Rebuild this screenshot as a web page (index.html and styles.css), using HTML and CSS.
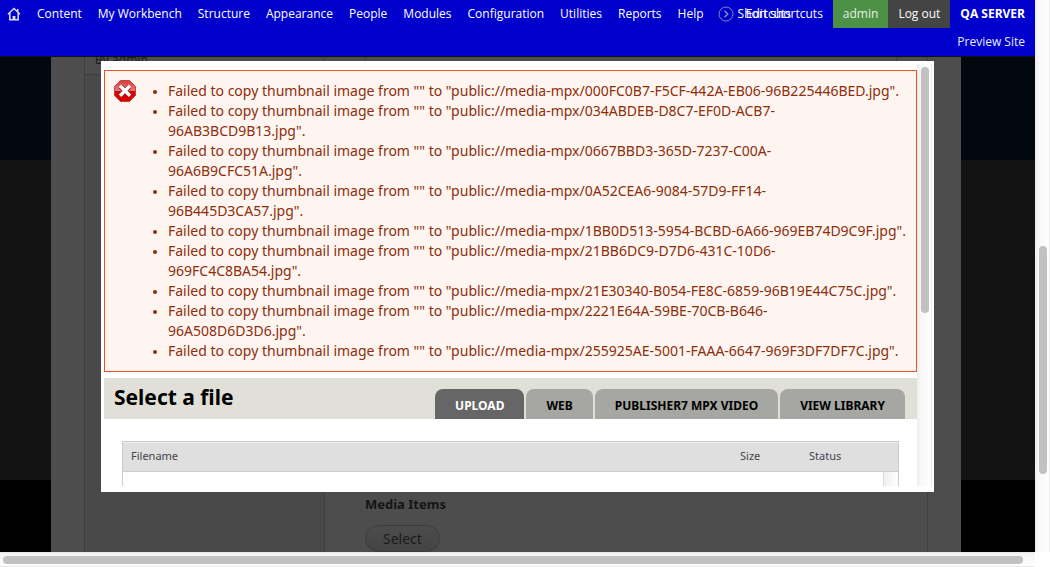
FILE: index.html
```
<!DOCTYPE html>
<html lang="en">
<head>
<meta charset="utf-8">
<title>Select a file</title>
<link rel="stylesheet" href="styles.css">
</head>
<body>
<div class="window">
  <div class="view">
    <header class="toolbar">
      <nav class="menu">
        <a class="home" href="#" aria-label="Home"><svg width="14" height="14" viewBox="0 0 14 14" fill="none" stroke="#dcdcff" stroke-width="1.5"><path d="M1 7.3 7 1.5l6 5.8M2.8 6v6.7h8.4V6M10.7 4.8V2"/><path d="M5.6 9h2.8v3.7H5.6z" fill="#dcdcff" stroke="none"/></svg></a>
        <a href="#">Content</a>
        <a href="#">My Workbench</a>
        <a href="#">Structure</a>
        <a href="#">Appearance</a>
        <a href="#">People</a>
        <a href="#">Modules</a>
        <a href="#">Configuration</a>
        <a href="#">Utilities</a>
        <a href="#">Reports</a>
        <a href="#">Help</a>
      </nav>
      <div class="shortcuts">
        <svg width="16" height="16" viewBox="0 0 16 16" fill="none" stroke="#8584b0"><circle cx="8" cy="8" r="7"/><path d="m6.5 4.8 3.2 3.2-3.2 3.2" stroke-width="1.6"/></svg>
        <a href="#">Shortcuts</a>
        <a class="edit-shortcuts" href="#">Edit shortcuts</a>
      </div>
      <div class="account">
        <div class="account-row">
          <a class="user" href="#">admin</a>
          <a class="logout" href="#">Log out</a>
          <a class="server" href="#">QA SERVER</a>
        </div>
        <a class="preview" href="#">Preview Site</a>
      </div>
    </header>
    <div class="backdrop">
      <div class="side"></div>
      <div class="page">
        <aside class="tabs-column"><div class="author">By admin</div></aside>
        <section class="fields">
          <div class="text-area"></div>
          <div class="media">
            <h2 class="media-title">Media Items</h2>
            <button class="select" type="button">Select</button>
          </div>
        </section>
      </div>
      <div class="side"></div>
    </div>
    <div class="dialog" role="dialog" aria-label="Select a file">
      <main class="content">
        <div class="error">
          <svg class="error-icon" width="22" height="22" viewBox="0 0 22 22"><defs><linearGradient id="red" x1="0" y1="0" x2="0" y2="1"><stop offset="0" stop-color="#d83c3c"/><stop offset=".48" stop-color="#e77777"/><stop offset=".5" stop-color="#cd0a0a"/><stop offset="1" stop-color="#e00000"/></linearGradient></defs><path d="M6.5.5h9l6 6v9l-6 6h-9l-6-6v-9z" fill="url(#red)" stroke="#c94040"/><path d="m6.5 6.5 9 9m0-9-9 9" stroke="#8a1515" stroke-width="4.6"/><path d="m6 5.8 10 10m0-10-10 10" stroke="#fff" stroke-width="3.4"/></svg>
          <ul class="messages">
            <li>Failed to copy thumbnail image from "" to "public://media-mpx/000FC0B7-F5CF-442A-EB06-96B225446BED.jpg".</li>
            <li>Failed to copy thumbnail image from "" to "public://media-mpx/034ABDEB-D8C7-EF0D-ACB7-<br>96AB3BCD9B13.jpg".</li>
            <li>Failed to copy thumbnail image from "" to "public://media-mpx/0667BBD3-365D-7237-C00A-<br>96A6B9CFC51A.jpg".</li>
            <li>Failed to copy thumbnail image from "" to "public://media-mpx/0A52CEA6-9084-57D9-FF14-<br>96B445D3CA57.jpg".</li>
            <li>Failed to copy thumbnail image from "" to "public://media-mpx/1BB0D513-5954-BCBD-6A66-969EB74D9C9F.jpg".</li>
            <li>Failed to copy thumbnail image from "" to "public://media-mpx/21BB6DC9-D7D6-431C-10D6-<br>969FC4C8BA54.jpg".</li>
            <li>Failed to copy thumbnail image from "" to "public://media-mpx/21E30340-B054-FE8C-6859-96B19E44C75C.jpg".</li>
            <li>Failed to copy thumbnail image from "" to "public://media-mpx/2221E64A-59BE-70CB-B646-<br>96A508D6D3D6.jpg".</li>
            <li>Failed to copy thumbnail image from "" to "public://media-mpx/255925AE-5001-FAAA-6647-969F3DF7DF7C.jpg".</li>
          </ul>
        </div>
        <div class="branding">
          <h1 class="title">Select a file</h1>
          <nav class="tabs">
            <a class="tab active" href="#">UPLOAD</a>
            <a class="tab" href="#">WEB</a>
            <a class="tab" href="#">PUBLISHER7 MPX VIDEO</a>
            <a class="tab" href="#">VIEW LIBRARY</a>
          </nav>
        </div>
        <div class="uploader">
          <table class="files">
            <thead><tr><th>Filename</th><th class="size">Size</th><th class="status">Status</th></tr></thead>
          </table>
          <div class="file-list"><div class="list-track"></div></div>
        </div>
      </main>
      <div class="track"><div class="thumb dialog-thumb"></div></div>
    </div>
  </div>
  <div class="track page-track"><div class="thumb page-thumb"></div></div>
  <div class="bottom-track"><div class="bottom-thumb"></div></div>
</div>
</body>
</html>
```
FILE: styles.css
```
* { box-sizing: border-box; }
body { margin: 0; font-family: "Noto Sans", "Open Sans", sans-serif; }
a { color: inherit; text-decoration: none; }
.window { display: grid; grid-template: minmax(0, 1fr) 15px / minmax(0, 1fr) 15px; height: 100vh; background: #fff; }
.view { position: relative; display: flex; flex-direction: column; overflow: hidden; }

.toolbar { display: flex; flex: none; background: #0000cd; border-bottom: 1px solid #111; color: #fff; font: 500 12px/28px "Open Sans", sans-serif; white-space: nowrap; }
.menu { display: flex; height: 28px; padding-left: 7px; gap: 16px; }
.home { display: flex; align-items: center; }
.shortcuts { position: relative; display: flex; align-items: center; flex: 1; height: 28px; padding-left: 14px; gap: 4px; }
.edit-shortcuts { position: absolute; right: 10px; }
.account { text-align: right; }
.account-row { display: flex; }
.user { padding: 0 10px; background: #4d9147; color: #e4efe3; }
.logout { padding: 0 10px; background: #444; }
.server { padding: 0 10px; font-weight: 700; }
.preview { display: block; padding-right: 10px; color: #e8e8ff; }

.backdrop { display: grid; grid-template-columns: 51px 1fr 74px; flex: 1; min-height: 0; }
.side { background: linear-gradient(#01080f 0 103px, #131313 103px 423px, #000 423px); }
.page { display: grid; grid-template-columns: 241px 1fr; padding: 0 33px; background: #4d4d4d; overflow: hidden; }
.tabs-column { border: solid #3e3e3e; border-width: 0 1px; background: #494949; }
.author { height: 18px; padding-left: 10px; border-bottom: 1px solid #3e3e3e; background: #4d4d4d; color: #1c1c1c; font-size: 12px; line-height: 5px; }
.fields { display: flex; flex-direction: column; justify-content: space-between; padding: 0 30px 0 40px; border-right: 1px solid #3e3e3e; }
.text-area { height: 12px; border: solid #3e3e3e; border-width: 0 1px 1px; }
.media-title { margin: 0 0 11px; color: #151515; font-size: 13px; line-height: 20px; }
.select { display: block; height: 27px; padding: 0 17px; border: 1px solid #3c3c3c; border-radius: 14px; background: linear-gradient(#4c4c4c, #444); color: #1b1b1b; font: 14px/24px "Noto Sans", sans-serif; }

.dialog { position: absolute; inset: 61px 101px 60px; display: flex; padding: 3px 2px 6px 3px; background: #fff; }
.content { display: flex; flex: 1; flex-direction: column; padding-top: 6px; min-width: 0; overflow: hidden; }
.error { display: flex; flex: none; align-items: flex-start; margin-bottom: 6px; padding: 9px; border: 1px solid #ed541d; background: #fef5f1; color: #8c2e0b; }
.error-icon { flex: none; }
.messages { margin: 0; padding: 1px 0 1px 32px; font-size: 14px; line-height: 20px; white-space: nowrap; }
.messages li::marker { font-size: 12px; }
.branding { display: flex; flex: none; align-items: flex-end; justify-content: space-between; height: 41px; padding: 0 12px 0 10px; background: #e0e0d8; }
.title { align-self: flex-start; margin: 0; font-size: 21px; line-height: 38px; }
.tabs { display: flex; gap: 2px; }
.tab { height: 30px; padding: 2px 20px 0; border-radius: 8px 8px 0 0; background: #a6a7a2; color: #000; font-size: 12px; font-weight: 700; line-height: 30px; }
.active { background: #666; color: #fff; }
.uploader { display: flex; flex: 1; flex-direction: column; min-height: 0; margin: 22px 18px 0; border: solid #ccc; border-width: 1px 1px 0; }
.files { width: 100%; border-collapse: collapse; border-top: 1px solid #efefef; background: #dfdfdf; color: #42454a; font-size: 11px; table-layout: fixed; }
.files th { height: 29px; padding: 0 8px 3px; border-bottom: 1px solid #ccc; font-weight: 400; text-align: left; }
.files .size { width: 69px; }
.files .status { width: 97px; }
.file-list { display: flex; flex: 1; justify-content: flex-end; }
.list-track { width: 15px; border-left: 1px solid #ddd; background: linear-gradient(90deg, #f0f0f0, #fff); }

.track { width: 15px; flex: none; padding: 3px 3px 0 4px; border-right: 1px solid #ececec; background: linear-gradient(90deg, #ececec, #f8f8f8 25%, #fff); }
.thumb { width: 8px; border-radius: 4px; background: #c1c1c1; }
.dialog-thumb { height: 246px; }
.page-track { padding-top: 246px; }
.page-thumb { height: 228px; }
.bottom-track { padding: 3px 12px 3px 3px; border: solid #e8e8e8; border-width: 1px 0; background: linear-gradient(#f3f3f3, #fff); }
.bottom-thumb { height: 8px; border-radius: 4px; background: #c1c1c1; }
```
